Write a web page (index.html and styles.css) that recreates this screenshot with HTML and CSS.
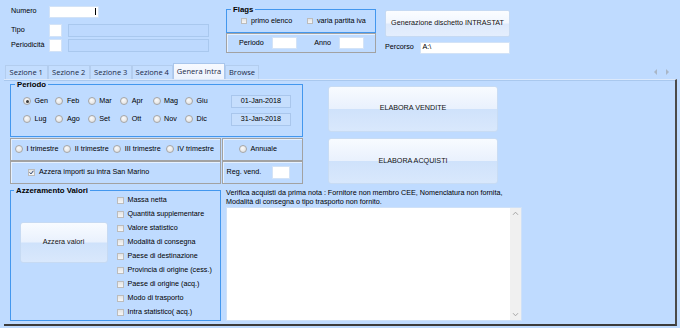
FILE: index.html
```html
<!DOCTYPE html>
<html>
<head>
<meta charset="utf-8">
<title>Genera Intra</title>
<link rel="stylesheet" href="styles.css">
</head>
<body>
<div class="top">
  <div class="fields">
    <div class="frow r1"><span class="lbl">Numero</span><span class="inp w50"><span class="caret"></span></span></div>
    <div class="frow r2"><span class="lbl">Tipo</span><span class="inp w13"></span><span class="dis"></span></div>
    <div class="frow r3"><span class="lbl">Periodicità</span><span class="inp w13"></span><span class="dis"></span></div>
  </div>
  <div class="flagcol">
    <fieldset class="grp flags">
      <legend>Flags</legend>
      <div class="flagrow">
        <span class="chk c1"><span class="cb"></span>primo elenco</span>
        <span class="chk"><span class="cb"></span>varia partita iva</span>
      </div>
    </fieldset>
    <div class="etch perrow"><span>Periodo</span><span class="inp pin"></span><span class="anno">Anno</span><span class="inp ain"></span></div>
  </div>
  <div class="gencol">
    <div class="btn gen">Generazione dischetto INTRASTAT</div>
    <div class="perc"><span>Percorso</span><span class="inp path">A:\</span></div>
  </div>
</div>

<div class="tabs">
  <div class="tab t1">Sezione 1</div>
  <div class="tab t2">Sezione 2</div>
  <div class="tab t3">Sezione 3</div>
  <div class="tab t4">Sezione 4</div>
  <div class="tab sel t5">Genera Intra</div>
  <div class="tab t6">Browse</div>
  <svg class="arrows" width="17" height="6" viewBox="0 0 17 6"><path d="M4 0 L1 3 L4 6 Z" fill="#a9b6c6"/><path d="M13 0 L16 3 L13 6 Z" fill="#a9b6c6"/></svg>
</div>

<div class="panel">
  <div class="upper">
    <div class="leftcol">
      <fieldset class="grp periodo">
        <legend>Periodo</legend>
        <div class="mrow m1">
          <span class="rad"><span class="rb on"></span>Gen</span>
          <span class="rad"><span class="rb"></span>Feb</span>
          <span class="rad"><span class="rb"></span>Mar</span>
          <span class="rad"><span class="rb"></span>Apr</span>
          <span class="rad"><span class="rb"></span>Mag</span>
          <span class="rad"><span class="rb"></span>Giu</span>
          <span class="date">01-Jan-2018</span>
        </div>
        <div class="mrow m2">
          <span class="rad"><span class="rb"></span>Lug</span>
          <span class="rad"><span class="rb"></span>Ago</span>
          <span class="rad"><span class="rb"></span>Set</span>
          <span class="rad"><span class="rb"></span>Ott</span>
          <span class="rad"><span class="rb"></span>Nov</span>
          <span class="rad"><span class="rb"></span>Dic</span>
          <span class="date">31-Jan-2018</span>
        </div>
      </fieldset>
      <div class="brow b1">
        <div class="etch tri">
          <span class="rad q1"><span class="rb"></span>I trimestre</span>
          <span class="rad q2"><span class="rb"></span>II trimestre</span>
          <span class="rad q3"><span class="rb"></span>III trimestre</span>
          <span class="rad"><span class="rb"></span>IV trimestre</span>
        </div>
        <div class="etch ann"><span class="rad"><span class="rb"></span>Annuale</span></div>
      </div>
      <div class="brow">
        <div class="etch azz"><span class="chk"><span class="cb"><svg width="5" height="5" viewBox="0 0 5 5"><path d="M0.6 2.4 L2 3.9 L4.4 0.8" fill="none" stroke="#27416e" stroke-width="1"/></svg></span>Azzera importi su intra San Marino</span></div>
        <div class="etch reg"><span>Reg. vend.</span><span class="inp rin"></span></div>
      </div>
    </div>
    <div class="bcol">
      <div class="btn big">ELABORA VENDITE</div>
      <div class="btn big">ELABORA ACQUISTI</div>
    </div>
  </div>
  <div class="lower">
    <fieldset class="grp azzgrp">
      <legend>Azzeramento Valori</legend>
      <div class="azzin">
        <div class="btn azbtn">Azzera valori</div>
        <div class="clist">
          <span class="chk crow"><span class="cb"></span>Massa netta</span>
          <span class="chk crow"><span class="cb"></span>Quantità supplementare</span>
          <span class="chk crow"><span class="cb"></span>Valore statistico</span>
          <span class="chk crow"><span class="cb"></span>Modalità di consegna</span>
          <span class="chk crow"><span class="cb"></span>Paese di destinazione</span>
          <span class="chk crow"><span class="cb"></span>Provincia di origine (cess.)</span>
          <span class="chk crow"><span class="cb"></span>Paese di origine (acq.)</span>
          <span class="chk crow"><span class="cb"></span>Modo di trasporto</span>
          <span class="chk crow"><span class="cb"></span>Intra statistico( acq.)</span>
        </div>
      </div>
    </fieldset>
    <div class="vcol">
      <div class="vtext">Verifica acquisti da prima nota : Fornitore non membro CEE, Nomenclatura non fornita,<br>Modalità di consegna o tipo trasporto non fornito.</div>
      <div class="tarea">
        <div class="tcontent"></div>
        <div class="sbar">
          <svg width="7" height="5" viewBox="0 0 7 5"><path d="M1 3.8 L3.5 1.2 L6 3.8" fill="none" stroke="#a6a6a6" stroke-width="1"/></svg>
          <svg width="7" height="5" viewBox="0 0 7 5"><path d="M1 1.2 L3.5 3.8 L6 1.2" fill="none" stroke="#a6a6a6" stroke-width="1"/></svg>
        </div>
      </div>
    </div>
  </div>
</div>
</body>
</html>
```

FILE: styles.css
```css
* { box-sizing: border-box; }
html, body { margin: 0; padding: 0; }
body {
  width: 680px;
  height: 328px;
  overflow: hidden;
  background: #bfdbff;
  font-family: "Liberation Sans", Arial, sans-serif;
  font-size: 7.2px;
  line-height: 1.2;
  color: #000;
}

/* ---------- top area ---------- */
.top { display: flex; height: 63px; }
.fields { margin-left: 11px; width: 198px; padding-top: 6px; }
.frow { display: flex; align-items: center; }
.r1 { height: 11.5px; }
.r2 { height: 13px; margin-top: 6.5px; }
.r3 { height: 13px; margin-top: 2px; }
.lbl { width: 38px; flex: none; }
.inp {
  display: flex;
  align-items: center;
  background: #fff;
  border: 1px solid #d3e3f7;
  flex: none;
}
.frow .inp { height: 100%; }
.w50 { width: 50px; justify-content: flex-end; padding-right: 2px; }
.caret { width: 1px; height: 7px; background: #000; }
.w13 { width: 13px; }
.dis {
  margin-left: 6px;
  width: 141px;
  height: 100%;
  border: 1px solid #a9c8ee;
  background: #bdd9fe;
}

.flagcol { margin-left: 17px; width: 150px; padding-top: 5px; }
.grp {
  margin: 0;
  padding: 0;
  min-width: 0;
  border: 1px solid #4397ee;
}
.grp legend {
  font-weight: bold;
  font-size: 7.8px;
  line-height: 9px;
  padding: 0 2px;
  margin-left: 4px;
  color: #000;
}
.flags { height: 28px; }
.flagrow {
  display: flex;
  align-items: center;
  height: 13px;
  margin-top: 1px;
  padding-left: 14px;
}
.chk { display: flex; align-items: center; gap: 4px; white-space: nowrap; }
.c1 { width: 66px; flex: none; }
.cb {
  width: 7px;
  height: 7px;
  flex: none;
  border: 1px solid #bcbcbc;
  background: linear-gradient(#e4e4e4, #f6f6f6);
  display: flex;
  align-items: center;
  justify-content: center;
}
.flags .cb { width: 6px; height: 6px; }

.etch {
  border: 1px solid #a2a2a2;
  box-shadow: inset 1px 1px 0 #e6f1ff;
}
.perrow {
  display: flex;
  align-items: center;
  height: 20px;
  padding-left: 12px;
}
.pin { width: 25px; height: 12px; margin-left: 8.5px; }
.anno { margin-left: 17px; }
.ain { width: 25px; height: 12px; margin-left: 7.5px; }

.gencol { margin-left: 9px; width: 125px; padding-top: 9.5px; }
.btn {
  display: flex;
  align-items: center;
  justify-content: center;
  border: 1px solid #c6daf3;
  border-radius: 2px;
  background: linear-gradient(#fbfdff 0%, #f1f6fe 48%, #dde9fb 52%, #e4eefd 100%);
  color: #111;
  white-space: nowrap;
}
.gen { width: 125px; height: 27.5px; }
.perc { display: flex; align-items: center; height: 12px; margin-top: 4.5px; }
.path { width: 90px; height: 12px; margin-left: auto; padding-left: 1.5px; }

/* ---------- tabs ---------- */
.tabs {
  display: flex;
  align-items: flex-end;
  height: 16px;
  padding-left: 5px;
}
.tab {
  height: 14px;
  border: 1px solid #b3cdee;
  border-bottom: none;
  background: #c3ddfe;
  display: flex;
  align-items: center;
  justify-content: center;
  font-family: "Open Sans", "Liberation Sans", sans-serif;
  font-size: 7.5px;
  color: #1a2a48;
  flex: none;
}
.tab.sel {
  height: 16px;
  background: linear-gradient(#f7faff, #edf3fd);
  border-color: #a9c6ec;
}
.t1 { width: 42.5px; }
.t2 { width: 42.5px; }
.t3 { width: 41.5px; }
.t4 { width: 41.5px; }
.t5 { width: 52px; }
.t6 { width: 34px; }
.arrows { margin-left: auto; margin-right: 10px; align-self: center; margin-top: 2px; }

/* ---------- panel ---------- */
.panel {
  margin-left: 4px;
  width: 673px;
  height: 247px;
  border-top: 1px solid #dce9fb;
  box-shadow: inset 0 1px 0 #a9c8ee;
  border-right: 2px solid #4a4a4a;
  border-bottom: 2px solid #3c3c3c;
  padding-left: 6px;
}
.upper { display: flex; height: 104px; }
.leftcol { width: 293px; flex: none; }
.periodo { height: 57px; }
.mrow {
  display: flex;
  align-items: center;
  height: 13px;
  padding-left: 12px;
}
.m1 { margin-top: 6px; }
.m2 { margin-top: 5px; }
.rad { display: flex; align-items: center; gap: 3.5px; white-space: nowrap; flex: none; }
.mrow .rad { width: 32.4px; }
.rb {
  width: 8px;
  height: 8px;
  border-radius: 50%;
  border: 1px solid #a6a6a6;
  background: radial-gradient(circle at 40% 35%, #fbfbfb, #dadada);
  flex: none;
  display: flex;
  align-items: center;
  justify-content: center;
}
.rb.on::after {
  content: "";
  width: 3px;
  height: 3px;
  border-radius: 50%;
  background: #3a3a3a;
}
.date {
  margin-left: 13.6px;
  width: 60px;
  height: 13px;
  border: 1px solid #a9c6ec;
  background: #c6defd;
  display: flex;
  align-items: center;
  justify-content: center;
  flex: none;
}
.brow { display: flex; height: 23px; }
.b1 { margin-top: 1px; }
.tri {
  width: 211px;
  display: flex;
  align-items: center;
  padding-left: 4px;
}
.q1 { width: 48.3px; }
.q2 { width: 50px; }
.q3 { width: 52.4px; }
.ann {
  width: 81px;
  margin-left: 1px;
  display: flex;
  align-items: center;
  padding-left: 16px;
}
.azz {
  width: 211px;
  display: flex;
  align-items: center;
  padding-left: 17px;
}
.reg {
  width: 81px;
  margin-left: 1px;
  display: flex;
  align-items: center;
  justify-content: space-between;
  padding: 0 12px 0 3.5px;
}
.rin { width: 18.5px; height: 12.5px; }

.bcol {
  margin-left: 25px;
  width: 170px;
  padding-top: 5.5px;
  display: flex;
  flex-direction: column;
  gap: 6.5px;
}
.big {
  height: 46px;
  border-radius: 3px;
  border-color: #c8dcf4;
  background: linear-gradient(#f8fbff 0%, #e9f1fd 49%, #cfe2fb 51%, #d9e8fc 100%);
}

.lower { display: flex; margin-top: 1.5px; }
.azzgrp { width: 211px; height: 135.5px; flex: none; }
.azzgrp legend { margin-left: 3px; }
.azzin { display: flex; }
.azbtn {
  width: 88px;
  height: 41px;
  margin-left: 8.5px;
  margin-top: 27.5px;
  flex: none;
  border-radius: 3px;
  background: linear-gradient(#f8fbff 0%, #e9f1fd 49%, #cfe2fb 51%, #d9e8fc 100%);
}
.clist {
  margin-left: 9px;
  margin-top: -1.5px;
  display: flex;
  flex-direction: column;
}
.crow { height: 14.1px; }

.vcol { margin-left: 5px; width: 296px; padding-top: 3.5px; }
.vtext { line-height: 8.7px; white-space: nowrap; }
.tarea {
  margin-top: 0.5px;
  height: 114px;
  width: 295.5px;
  display: flex;
  border: 1px solid #cfe1f8;
  background: #fff;
}
.tcontent { flex: 1; }
.sbar {
  width: 11px;
  background: #f0f0f0;
  display: flex;
  flex-direction: column;
  justify-content: space-between;
  align-items: center;
  padding: 3px 0;
}
```
